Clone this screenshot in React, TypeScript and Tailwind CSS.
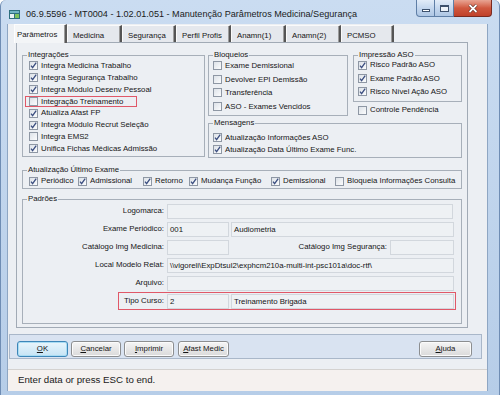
import React from "react";

function Check({ checked }: { checked: boolean }) {
  return (
    <span className="flex h-[9px] w-[9px] shrink-0 items-center justify-center border border-[#8e97a4] bg-gradient-to-br from-[#dde2e8] to-[#fbfcfd]">
      {checked && (
        <svg width="7" height="7" viewBox="0 0 7 7" className="block">
          <path d="M1 3.7 L2.6 5.7 L6.2 0.6" fill="none" stroke="#3b4e80" strokeWidth="1.3" />
        </svg>
      )}
    </span>
  );
}

function CB({
  label,
  checked,
  className = "",
}: {
  label: string;
  checked: boolean;
  className?: string;
}) {
  return (
    <div className={`flex items-center gap-[3px] whitespace-nowrap ${className}`}>
      <Check checked={checked} />
      <span>{label}</span>
    </div>
  );
}

function Group({
  title,
  className = "",
  children,
}: {
  title: string;
  className?: string;
  children?: React.ReactNode;
}) {
  return (
    <fieldset className={`shrink-0 border border-[#a7afb9] ${className}`}>
      <legend className="ml-[4px] px-[1px] leading-[10px]">{title}</legend>
      {children}
    </fieldset>
  );
}

function Input({ w, text = "" }: { w: string; text?: string }) {
  return (
    <div
      className={`${w} h-[15px] shrink-0 overflow-hidden whitespace-nowrap border border-[#d2d7dd] bg-[#eef1f4] pl-[2px] leading-[13px]`}
    >
      {text}
    </div>
  );
}

function Btn({
  w,
  first,
  rest,
  focus = false,
}: {
  w: string;
  first: string;
  rest: string;
  focus?: boolean;
}) {
  return (
    <div
      className={`${w} flex h-[16px] shrink-0 items-center justify-center rounded-[3px] border ${
        focus
          ? "border-[#3d86b8] bg-gradient-to-b from-[#e9f5fc] to-[#c6e4f5] shadow-[inset_0_0_0_1px_#a9dcf3]"
          : "border-[#8c8e90] bg-gradient-to-b from-[#f5f5f5] to-[#dadada] shadow-[inset_0_0_0_1px_#fbfbfb]"
      }`}
    >
      <span>
        <span className="underline">{first}</span>
        {rest}
      </span>
    </div>
  );
}

const tabs: [string, string][] = [
  ["Parâmetros", "w-[53px]"],
  ["Medicina", "w-[55px]"],
  ["Segurança", "w-[54px]"],
  ["Perfil Profis", "w-[55px]"],
  ["Anamn(1)", "w-[55px]"],
  ["Anamn(2)", "w-[55px]"],
  ["PCMSO", "w-[53px]"],
];

export default function App() {
  return (
    <div className="flex h-[395px] w-[500px] flex-col overflow-hidden rounded-t-[6px] border-x border-[#6f8db4] bg-gradient-to-b from-[#cadcf1] to-[#b6cde8] font-['Liberation_Sans',Arial,sans-serif] text-[7.8px] text-[#151515]">
      {/* Title bar */}
      <div className="flex h-[24px] shrink-0 items-start">
        <svg width="11" height="9" viewBox="0 0 11 9" className="ml-[8px] mt-[10px] shrink-0">
          <rect x="0" y="0" width="11" height="9" fill="#2d6f7e" />
          <rect x="1" y="1" width="9" height="2" fill="#6fb3c4" />
          <rect x="1" y="4" width="4" height="4" fill="#e8f2f4" />
          <rect x="6" y="4" width="4" height="4" fill="#7cc25e" />
        </svg>
        <div className="ml-[6px] mt-[8px] whitespace-nowrap text-[9.1px] leading-[12px] text-[#1b1b1b]">
          06.9.5596 - MT0004 - 1.02.01.051 - Manutenção Parâmetros Medicina/Segurança
        </div>
        <div className="ml-auto mr-[7px] flex">
          <div className="flex h-[17px] w-[19px] items-center justify-center rounded-bl-[4px] border border-t-0 border-[#5e7ea6] bg-gradient-to-b from-[#e2ecf8] via-[#c4d7ee] to-[#aec6e4]">
            <div className="mt-[5px] h-[3px] w-[8px] border border-[#3d516d] bg-white" />
          </div>
          <div className="flex h-[17px] w-[19px] items-center justify-center border-b border-r border-[#5e7ea6] bg-gradient-to-b from-[#e2ecf8] via-[#c4d7ee] to-[#aec6e4]">
            <div className="h-[7px] w-[9px] border border-t-2 border-[#3d516d] bg-white/70" />
          </div>
          <div className="flex h-[17px] w-[38px] items-center justify-center rounded-br-[4px] border-b border-r border-[#7a2a20] bg-gradient-to-b from-[#e8a493] via-[#d0583f] to-[#c0412a]">
            <svg width="10" height="9" viewBox="0 0 10 9">
              <path d="M1.5 1 L8.5 8 M8.5 1 L1.5 8" stroke="#4a1a12" strokeWidth="3" />
              <path d="M1.5 1 L8.5 8 M8.5 1 L1.5 8" stroke="#ffffff" strokeWidth="1.8" />
            </svg>
          </div>
        </div>
      </div>

      {/* Client area */}
      <div className="ml-[6px] mr-[11px] flex h-[367px] shrink-0 flex-col border-x border-[#8ea6c3] bg-[#eceff3]">
        {/* Tabs */}
        <div className="ml-[6px] flex h-[18px] shrink-0 items-end">
          {tabs.map(([t, w], i) =>
            i === 0 ? (
              <div
                key={t}
                className={`${w} relative z-10 -mb-px flex h-[19px] shrink-0 items-center border-l border-t border-[#fdfdfd] border-r-2 border-r-[#5a5a5a] bg-[#f3f5f7] pl-[2px] pt-[2px] shadow-[inset_-1px_0_0_#9c9c9c]`}
              >
                {t}
              </div>
            ) : (
              <div
                key={t}
                className={`${w} flex h-[17px] shrink-0 items-center border-l border-t border-[#fafafa] border-r-2 border-r-[#555555] bg-[#e5e8ed] pl-[5px] pt-[3px] shadow-[inset_-1px_0_0_#9c9c9c]`}
              >
                {t}
              </div>
            )
          )}
        </div>

        {/* Tab panel */}
        <div className="ml-[8px] flex h-[286px] w-[452px] shrink-0 flex-col border border-[#a1aab5] pl-[5px] pt-[7px]">
          {/* Row 1 */}
          <div className="flex items-start">
            <Group title="Integrações" className="h-[107px] w-[183px]">
              <div className="flex flex-col pl-[2px]">
                {[
                  ["Integra Medicina Trabalho", true],
                  ["Integra Segurança Trabalho", true],
                  ["Integra Módulo Desenv Pessoal", true],
                  ["Integração Treinamento", false],
                  ["Atualiza Afast FP", true],
                  ["Integra Módulo Recrut Seleção", true],
                  ["Integra EMS2", false],
                  ["Unifica Fichas Médicas Admissão", true],
                ].map(([l, c], i) => (
                  <CB
                    key={l as string}
                    label={l as string}
                    checked={c as boolean}
                    className={`h-[11.85px] border pl-[3px] ${
                      i === 3 ? "w-[112px] border-[#e05868]" : "border-transparent"
                    }`}
                  />
                ))}
              </div>
            </Group>

            <div className="ml-[3px] flex w-[254px] shrink-0 flex-col">
              <div className="flex items-start">
                <Group title="Bloqueios" className="h-[66px] w-[140px]">
                  <div className="-mt-px flex flex-col pl-[4px]">
                    {["Exame Demissional", "Devolver EPI Demissão", "Transferência", "ASO - Exames Vencidos"].map(
                      (l) => (
                        <CB key={l} label={l} checked={false} className="h-[13.6px]" />
                      )
                    )}
                  </div>
                </Group>
                <div className="ml-[5px] flex w-[109px] shrink-0 flex-col">
                  <Group title="Impressão ASO" className="h-[52px] w-[109px]">
                    <div className="-mt-[1.5px] flex flex-col pl-[4px]">
                      {["Risco Padrão ASO", "Exame Padrão ASO", "Risco Nível Ação ASO"].map((l) => (
                        <CB key={l} label={l} checked={true} className="h-[13.3px]" />
                      ))}
                    </div>
                  </Group>
                  <CB label="Controle Pendência" checked={false} className="ml-[5px] mt-[2px] h-[12px]" />
                </div>
              </div>
              <Group title="Mensagens" className="mt-[2px] h-[40px] w-[254px]">
                <div className="mt-[3.5px] flex flex-col pl-[4px]">
                  <CB label="Atualização Informações ASO" checked={true} className="h-[12.3px]" />
                  <CB label="Atualização Data Último Exame Func." checked={true} className="h-[12.3px]" />
                </div>
              </Group>
            </div>
          </div>

          {/* Atualização Último Exame */}
          <Group title="Atualização Último Exame" className="mt-[7px] h-[24px] w-[440px]">
            <div className="flex h-[12px] items-center pl-[6px]">
              <CB label="Periódico" checked={true} className="w-[49px] shrink-0" />
              <CB label="Admissional" checked={true} className="w-[65px] shrink-0" />
              <CB label="Retorno" checked={true} className="w-[46px] shrink-0" />
              <CB label="Mudança Função" checked={true} className="w-[82px] shrink-0" />
              <CB label="Demissional" checked={true} className="w-[64px] shrink-0" />
              <CB label="Bloqueia Informações Consulta" checked={false} className="shrink-0" />
            </div>
          </Group>

          {/* Padrões */}
          <Group title="Padrões" className="mt-[5px] h-[130px] w-[440px]">
            <div className="-mt-[2px] flex flex-col">
              <div className="flex h-[18px] items-center">
                <div className="w-[141px] shrink-0 text-right">Logomarca:</div>
                <div className="ml-[3px]">
                  <Input w="w-[286px]" />
                </div>
              </div>
              <div className="flex h-[18px] items-center">
                <div className="w-[141px] shrink-0 text-right">Exame Periódico:</div>
                <div className="ml-[3px]">
                  <Input w="w-[62px]" text="001" />
                </div>
                <div className="ml-[2px]">
                  <Input w="w-[223px]" text="Audiometria" />
                </div>
              </div>
              <div className="flex h-[18px] items-center">
                <div className="w-[141px] shrink-0 text-right">Catálogo Img Medicina:</div>
                <div className="ml-[3px]">
                  <Input w="w-[62px]" />
                </div>
                <div className="w-[158px] shrink-0 text-right">Catálogo Img Segurança:</div>
                <div className="ml-[3px]">
                  <Input w="w-[64px]" />
                </div>
              </div>
              <div className="flex h-[18px] items-center">
                <div className="w-[141px] shrink-0 text-right">Local Modelo Relat:</div>
                <div className="ml-[3px]">
                  <Input w="w-[287px]" text="\\vigoreli\ExpDtsul2\exphcm210a-multi-int-psc101a\doc-rtf\" />
                </div>
              </div>
              <div className="flex h-[18px] items-center">
                <div className="w-[141px] shrink-0 text-right">Arquivo:</div>
                <div className="ml-[3px]">
                  <Input w="w-[287px]" />
                </div>
              </div>
              <div className="flex h-[18px] items-center">
                <div className="w-[95px] shrink-0" />
                <div className="flex h-[18px] w-[338px] shrink-0 items-center border border-[#e05868]">
                  <div className="w-[45px] shrink-0 text-right">Tipo Curso:</div>
                  <div className="ml-[3px]">
                    <Input w="w-[62px]" text="2" />
                  </div>
                  <div className="ml-[2px]">
                    <Input w="w-[223px]" text="Treinamento Brigada" />
                  </div>
                </div>
              </div>
            </div>
          </Group>
        </div>

        {/* Button bar */}
        <div className="ml-px mt-[6px] flex h-[25px] w-[473px] shrink-0 items-end border border-[#a9b7c9] bg-[#d9e3f1] pb-px pl-[7px] pr-[9px]">
          <Btn w="w-[51px]" first="O" rest="K" focus />
          <div className="ml-[3px]">
            <Btn w="w-[50px]" first="C" rest="ancelar" />
          </div>
          <div className="ml-[3px]">
            <Btn w="w-[50px]" first="I" rest="mprimir" />
          </div>
          <div className="ml-[4px]">
            <Btn w="w-[51px]" first="A" rest="fast Medic" />
          </div>
          <div className="ml-auto">
            <Btn w="w-[53px]" first="A" rest="juda" />
          </div>
        </div>

        <div className="h-[10px] shrink-0" />

        {/* Status bar */}
        <div className="flex h-[22px] shrink-0 items-center border-t border-[#d4d2d0] bg-[#f5f1ef] pl-[10px] text-[9.7px] text-[#1a1a1a]">
          Enter data or press ESC to end.
        </div>
      </div>
    </div>
  );
}
